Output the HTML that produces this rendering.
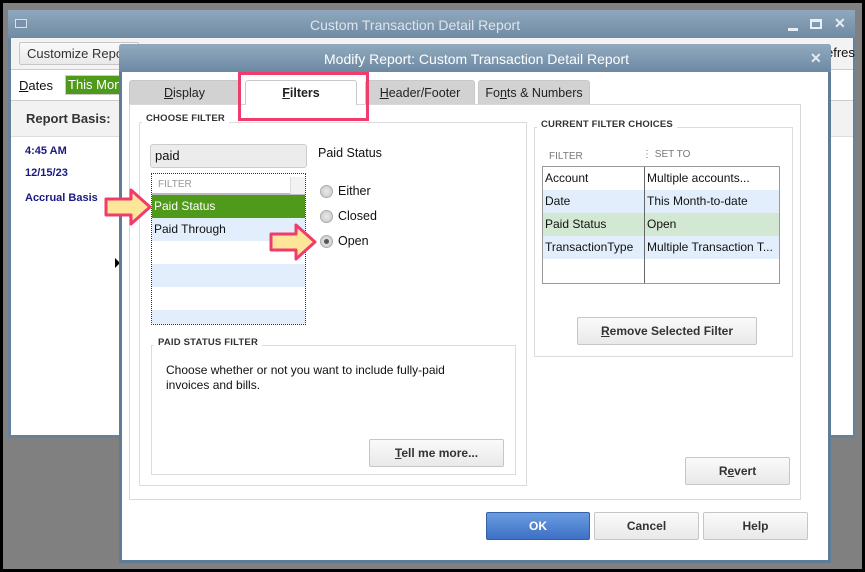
<!DOCTYPE html>
<html><head><meta charset="utf-8"><style>
*{box-sizing:border-box;margin:0;padding:0}
body{width:865px;height:572px;background:#000;position:relative;overflow:hidden;font-family:"Liberation Sans",Arial,sans-serif;font-size:12px;color:#111}
.a{position:absolute;white-space:nowrap}
.btn{position:absolute;border:1px solid #c6c6c6;border-radius:2px;background:linear-gradient(#fafafa,#e9e9e9);text-align:center;font-weight:bold;color:#333;font-size:12px;white-space:nowrap}
.grp{position:absolute;border:1px solid #dcdcdc}
.lbl{position:absolute;background:#fff;font-size:9.5px;font-weight:bold;color:#333;padding:0 4px;letter-spacing:.2px;white-space:nowrap}
.tab{position:absolute;top:80px;height:24px;background:#d2d2d2;border:1px solid #c8c8c8;border-bottom:none;border-radius:3px 3px 0 0;text-align:center;line-height:24px;font-size:12.5px;color:#222}
.radio{position:absolute;width:13px;height:13px;border-radius:50%;border:1px solid #aaa;background:radial-gradient(#e8e8e8,#c8c8c8)}
.row{position:absolute;left:0;width:153px;height:23px;line-height:23px;padding-left:2px;font-size:12px}
.tr{position:absolute;left:0;width:236px;height:23px;line-height:23px;font-size:12px;white-space:nowrap}
.tr span{position:absolute;left:2px}
.tr span+span{left:104px}
</style></head><body>
<div class="a" style="left:3px;top:3px;width:859px;height:566px;background:#808080"></div>
<!-- back window -->
<div class="a" style="left:8px;top:10px;width:847px;height:428px;background:#66819a"></div>
<div class="a" style="left:8px;top:10px;width:847px;height:28px;background:linear-gradient(#8fa8bd,#6f8aa3)"></div>
<div class="a" style="left:15px;top:19px;width:12px;height:9px;border:1px solid #d8e0e8;background:#7b93aa"></div>
<div class="a" style="left:310px;top:17px;color:#dde5ec;font-size:14px">Custom Transaction Detail Report</div>
<div class="a" style="left:788px;top:28px;width:10px;height:3px;background:#e8eef3"></div>
<div class="a" style="left:810px;top:19px;width:12px;height:10px;border:2px solid #e8eef3;border-top-width:3px"></div>
<div class="a" style="left:834px;top:15px;color:#e8eef3;font-size:14px;font-weight:bold">✕</div>
<div class="a" style="left:11px;top:38px;width:842px;height:397px;background:#fff"></div>
<div class="a" style="left:11px;top:38px;width:842px;height:32px;background:#f3f3f3;border-bottom:1px solid #ccc"></div>
<div class="btn" style="left:19px;top:42px;width:120px;height:23px;line-height:21px;text-align:left;padding-left:7px;font-weight:normal;font-size:13px">Customize Report</div>
<div class="a" style="left:826px;top:45px;font-size:13px">efres</div>
<div class="a" style="left:11px;top:71px;width:842px;height:30px;background:#fff;border-bottom:1px solid #ccc"></div>
<div class="a" style="left:19px;top:78px;font-size:13px"><u>D</u>ates</div>
<div class="a" style="left:65px;top:75px;width:60px;height:20px;background:#4f9a1a;color:#fff;font-size:13px;line-height:18px;padding-left:2px;border:1px solid #ccc;overflow:hidden">This Month</div>
<div class="a" style="left:11px;top:101px;width:842px;height:36px;background:#f2f2f2;border-bottom:1px solid #ddd"></div>
<div class="a" style="left:26px;top:111px;font-size:13px;font-weight:bold;color:#333">Report Basis:</div>
<div class="a" style="left:25px;top:145px;font-size:11px;font-weight:bold;color:#1a1a80">4:45 AM</div>
<div class="a" style="left:25px;top:167px;font-size:11px;font-weight:bold;color:#1a1a80">12/15/23</div>
<div class="a" style="left:25px;top:192px;font-size:11px;font-weight:bold;color:#1a1a80">Accrual Basis</div>
<div class="a" style="left:115px;top:258px;width:0;height:0;border-top:5px solid transparent;border-bottom:5px solid transparent;border-left:5px solid #000"></div>
<!-- dialog -->
<div class="a" style="left:119px;top:44px;width:712px;height:519px;background:#5e7c96;border-radius:3px 3px 0 0"></div>
<div class="a" style="left:119px;top:44px;width:712px;height:28px;background:linear-gradient(#91aabf,#6d89a2);border-radius:3px 3px 0 0"></div>
<div class="a" style="left:324px;top:51px;color:#fff;font-size:14px">Modify Report: Custom Transaction Detail Report</div>
<div class="a" style="left:810px;top:50px;color:#e5ebf0;font-size:14px;font-weight:bold">✕</div>
<div class="a" style="left:122px;top:72px;width:706px;height:488px;background:#fff"></div>
<!-- tabs -->
<div class="tab" style="left:129px;width:111px"><u>D</u>isplay</div>
<div class="tab" style="left:245px;width:112px;background:#fff;height:25px;font-weight:bold;z-index:2"><u>F</u>ilters</div>
<div class="tab" style="left:365px;width:110px"><u>H</u>eader/Footer</div>
<div class="tab" style="left:478px;width:112px">Fo<u>n</u>ts &amp; Numbers</div>
<div class="a" style="left:129px;top:104px;width:672px;height:396px;border:1px solid #d8d8d8"></div>
<div class="a" style="left:238px;top:72px;width:131px;height:49px;border:3px solid #f03c6c;z-index:3"></div>
<!-- choose filter -->
<div class="grp" style="left:139px;top:122px;width:388px;height:364px"></div>
<div class="lbl" style="left:142px;top:113px">CHOOSE FILTER</div>
<div class="a" style="left:150px;top:144px;width:157px;height:24px;border:1px solid #ccc;border-radius:3px;background:#ececec;font-size:13px;line-height:22px;padding-left:4px">paid</div>
<div class="a" style="left:318px;top:146px;font-size:12.5px">Paid Status</div>
<div class="a" style="left:151px;top:173px;width:155px;height:152px;border:1px dotted #333;overflow:hidden">
 <div class="row" style="top:0;height:21px;line-height:21px;color:#999;font-size:10px;padding-left:6px;border-bottom:2px solid #bbb">FILTER</div>
 <div class="a" style="left:138px;top:3px;width:16px;height:17px;background:#f2f2f2;border-left:1px solid #ddd"></div>
 <div class="row" style="top:21px;background:#4f9a1a;color:#fff">Paid Status</div>
 <div class="row" style="top:44px;background:#e2eefc">Paid Through</div>
 <div class="row" style="top:90px;background:#e2eefc"></div>
 <div class="row" style="top:136px;background:#e2eefc"></div>
</div>
<div class="radio" style="left:320px;top:185px"></div><div class="a" style="left:338px;top:184px;font-size:12.5px">Either</div>
<div class="radio" style="left:320px;top:210px"></div><div class="a" style="left:338px;top:209px;font-size:12.5px">Closed</div>
<div class="radio" style="left:320px;top:235px"></div><div class="a" style="left:324px;top:239px;width:5px;height:5px;border-radius:50%;background:#555"></div><div class="a" style="left:338px;top:234px;font-size:12.5px">Open</div>
<div class="grp" style="left:151px;top:345px;width:365px;height:130px"></div>
<div class="lbl" style="left:154px;top:337px">PAID STATUS FILTER</div>
<div class="a" style="left:166px;top:363px;font-size:12px;line-height:15px">Choose whether or not you want to include fully-paid<br>invoices and bills.</div>
<div class="btn" style="left:369px;top:439px;width:135px;height:28px;line-height:26px"><u>T</u>ell me more...</div>
<!-- current filter -->
<div class="grp" style="left:534px;top:127px;width:259px;height:230px"></div>
<div class="lbl" style="left:537px;top:119px">CURRENT FILTER CHOICES</div>
<div class="a" style="left:549px;top:151px;font-size:10px;color:#777">FILTER</div>
<div class="a" style="left:642px;top:149px;font-size:10px;color:#777">⋮ SET TO</div>
<div class="a" style="left:542px;top:166px;width:238px;height:118px;border:1px solid #999;overflow:hidden">
 <div class="tr" style="top:0"><span>Account</span><span>Multiple accounts...</span></div>
 <div class="tr" style="top:23px;background:#e2eefc"><span>Date</span><span>This Month-to-date</span></div>
 <div class="tr" style="top:46px;background:#d3e8d2"><span>Paid Status</span><span>Open</span></div>
 <div class="tr" style="top:69px;background:#e2eefc"><span>TransactionType</span><span>Multiple Transaction T...</span></div>
 <div class="a" style="left:101px;top:0;width:1px;height:118px;background:#666"></div>
</div>
<div class="btn" style="left:577px;top:317px;width:180px;height:28px;line-height:26px"><u>R</u>emove Selected Filter</div>
<div class="btn" style="left:685px;top:457px;width:105px;height:28px;line-height:26px">R<u>e</u>vert</div>
<div class="btn" style="left:486px;top:512px;width:104px;height:28px;line-height:26px;background:linear-gradient(#6a9de0,#3d6fc6);border-color:#3560a8;color:#fff">OK</div>
<div class="btn" style="left:594px;top:512px;width:105px;height:28px;line-height:26px">Cancel</div>
<div class="btn" style="left:703px;top:512px;width:105px;height:28px;line-height:26px">Help</div>
<!-- arrows -->
<svg class="a" style="left:103px;top:187px;z-index:5" width="50" height="40"><polygon points="3,12 28,12 28,3 47,20 28,37 28,28 3,28" fill="#fde59a" stroke="#f03c6c" stroke-width="3" stroke-linejoin="round"/></svg>
<svg class="a" style="left:268px;top:222px;z-index:5" width="50" height="40"><polygon points="3,12 28,12 28,3 47,20 28,37 28,28 3,28" fill="#fde59a" stroke="#f03c6c" stroke-width="3" stroke-linejoin="round"/></svg>
</body></html>
